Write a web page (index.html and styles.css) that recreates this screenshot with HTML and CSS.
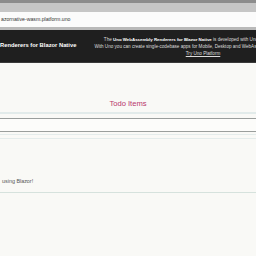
FILE: index.html
```html
<!DOCTYPE html>
<html lang="en">
<head>
    <meta charset="UTF-8">
    <meta name="viewport" content="width=device-width, initial-scale=1.0">
    <title>Todo Items</title>
    <link rel="stylesheet" href="styles.css">
</head>
<body>
    <div class="chrome">
        <div class="chrome-top"></div>
        <div class="chrome-bar">
            <div class="url">azornative-wasm.platform.uno</div>
        </div>
    </div>

    <div class="header">
        <div class="title">Renderers for Blazor Native</div>
        <div class="about">
            <p>The <b>Uno WebAssembly Renderers for Blazor Native</b> is developed with Uno Platform by nventive.</p>
            <p>With Uno you can create single-codebase apps for Mobile, Desktop and WebAssembly with C# and XAML.</p>
            <p><a href="#">Try Uno Platform</a></p>
        </div>
    </div>

    <div class="page">
        <h1 class="todo-title">Todo Items</h1>
        <div class="input-wrap">
            <div class="input"></div>
        </div>
        <div class="rule"></div>
        <div class="rule rule-low"></div>
        <div class="list">
            <p class="item">using Blazor!</p>
        </div>
    </div>
</body>
</html>
```

FILE: styles.css
```css
*{
    margin: 0;
    padding: 0;
    box-sizing: border-box;
}
body{
    width: 256px;
    height: 256px;
    overflow: hidden;
    background-color: #f9f9f6;
    font-family: "Liberation Sans", "DejaVu Sans", sans-serif;
}
.chrome{
    background-color: #c6c6c6;
}
.chrome-top{
    height: 12px;
    border-top: 3px solid #8c8c8c;
}
.chrome-bar{
    height: 18px;
    padding-bottom: 2px;
    background-color: #b9b9b9;
}
.url{
    height: 15px;
    background-color: #fbfbfb;
    color: #333333;
    font-size: 5.2px;
    line-height: 15px;
    padding-left: 1px;
    white-space: nowrap;
}
.header{
    display: flex;
    align-items: center;
    height: 33px;
    background-color: #1f1f1f;
    color: #ffffff;
    border-bottom: 1px solid #3a3a3a;
    overflow: hidden;
}
.title{
    width: 92px;
    flex-shrink: 0;
    font-size: 5.8px;
    font-weight: bold;
    white-space: nowrap;
    padding-bottom: 2px;
}
.about{
    width: 222px;
    flex-shrink: 0;
    display: flex;
    flex-direction: column;
    align-items: center;
    font-size: 4.6px;
    line-height: 7px;
    color: #dddddd;
    white-space: nowrap;
}
.about b{
    font-size: 4.4px;
    color: #ffffff;
}
.about a{
    color: #dddddd;
}
.page{
    padding-top: 36px;
}
.todo-title{
    font-size: 7.6px;
    font-weight: normal;
    text-align: center;
    color: #b8366c;
    line-height: 10px;
}
.input-wrap{
    margin-top: 3px;
    border-top: 2px solid #e2ebea;
    padding-top: 4px;
}
.input{
    height: 14px;
    border-top: 1px solid #9a9e9c;
    border-bottom: 1px solid #9a9e9c;
    background-color: #fcfcfa;
}
.rule{
    margin-top: 2px;
    height: 1px;
    background-color: #e4eceb;
}
.rule-low{
    margin-top: 3px;
}
.list{
    padding-top: 36px;
    padding-bottom: 5px;
    border-bottom: 1px solid #d6e2dd;
}
.item{
    font-size: 5.4px;
    line-height: 12px;
    color: #555555;
    padding-left: 2px;
}
```
